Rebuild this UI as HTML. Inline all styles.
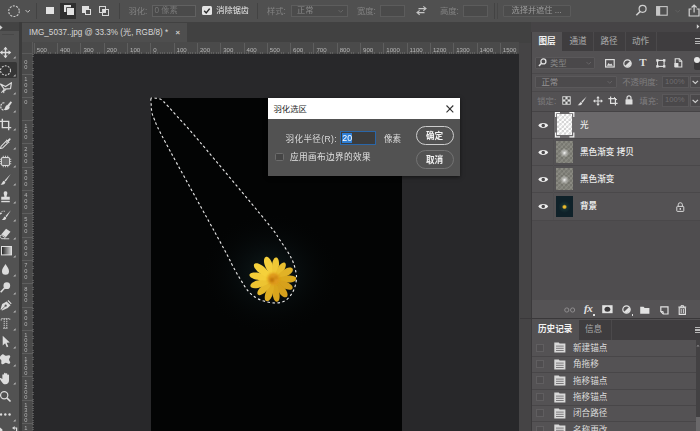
<!DOCTYPE html><html><head><meta charset="utf-8"><title>Photoshop</title><style>
html,body{margin:0;padding:0;}
body{width:700px;height:431px;overflow:hidden;background:#414141;position:relative;font-family:"Liberation Sans", "Noto Sans CJK SC", sans-serif;}
.a{position:absolute;box-sizing:border-box;}
.t{white-space:nowrap;}
svg{position:absolute;overflow:visible;}
#w{position:absolute;left:0;top:0;width:700px;height:431px;overflow:hidden;filter:blur(0.4px);}
</style></head><body><div id="w">
<div class="a" style="left:33px;top:53.5px;width:486px;height:378px;background:#28282a;"></div>
<div class="a" style="left:150.5px;top:97.5px;width:251px;height:334px;background:#030404;"></div>
<svg style="left:150.5px;top:97.5px" width="251" height="334" viewBox="0 0 251 334"><defs>
<radialGradient id="glow" cx="50%" cy="50%" r="50%">
<stop offset="0" stop-color="#12201f" stop-opacity="0.9"/>
<stop offset="0.4" stop-color="#0a1214" stop-opacity="0.6"/>
<stop offset="1" stop-color="#030404" stop-opacity="0"/>
</radialGradient>
<filter id="b1" x="-30%" y="-30%" width="160%" height="160%"><feGaussianBlur stdDeviation="0.7"/></filter>
<filter id="b2" x="-30%" y="-30%" width="160%" height="160%"><feGaussianBlur stdDeviation="0.8"/></filter>
<linearGradient id="pg" gradientUnits="userSpaceOnUse" x1="101.0" y1="159.5" x2="145.0" y2="203.5"><stop offset="0" stop-color="#f7d540"/><stop offset="0.5" stop-color="#ecbc26"/><stop offset="1" stop-color="#d29a18"/></linearGradient>
</defs><ellipse cx="119.0" cy="175.5" rx="70" ry="62" fill="url(#glow)"/><g filter="url(#b1)"><path d="M0,-2 C-2.1757999999999997,-4 -3.9559999999999995,-12.0 -3.76,-17.3 C-3.16,-22.8 -1.19,-24 0,-24 C1.19,-24 3.16,-22.8 3.76,-17.3 C3.9559999999999995,-12.0 2.1757999999999997,-4 0,-2Z" transform="translate(123.0 181.5) rotate(-20)" fill="#f4cf3a"/><path d="M0,-2 C-1.9866000000000001,-4 -3.612,-11.0 -3.43,-15.8 C-2.89,-20.9 -1.08,-22 0,-22 C1.08,-22 2.89,-20.9 3.43,-15.8 C3.612,-11.0 1.9866000000000001,-4 0,-2Z" transform="translate(123.0 181.5) rotate(6)" fill="#efc835"/><path d="M0,-2 C-1.8920000000000001,-4 -3.44,-10.0 -3.27,-14.4 C-2.75,-19.0 -1.03,-20 0,-20 C1.03,-20 2.75,-19.0 3.27,-14.4 C3.44,-10.0 1.8920000000000001,-4 0,-2Z" transform="translate(123.0 181.5) rotate(33)" fill="#e9be2e"/><path d="M0,-2 C-2.0812000000000004,-4 -3.7840000000000003,-10.8 -3.59,-15.5 C-3.03,-20.4 -1.14,-21.5 0,-21.5 C1.14,-21.5 3.03,-20.4 3.59,-15.5 C3.7840000000000003,-10.8 2.0812000000000004,-4 0,-2Z" transform="translate(123.0 181.5) rotate(60)" fill="#e1b226"/><path d="M0,-2 C-2.0339,-4 -3.698,-11.2 -3.51,-16.2 C-2.96,-21.4 -1.11,-22.5 0,-22.5 C1.11,-22.5 2.96,-21.4 3.51,-16.2 C3.698,-11.2 2.0339,-4 0,-2Z" transform="translate(123.0 181.5) rotate(88)" fill="#dba81f"/><path d="M0,-2 C-1.9393,-4 -3.526,-10.2 -3.35,-14.8 C-2.82,-19.5 -1.06,-20.5 0,-20.5 C1.06,-20.5 2.82,-19.5 3.35,-14.8 C3.526,-10.2 1.9393,-4 0,-2Z" transform="translate(123.0 181.5) rotate(116)" fill="#d7a11b"/><path d="M0,-2 C-2.0812000000000004,-4 -3.7840000000000003,-10.8 -3.59,-15.5 C-3.03,-20.4 -1.14,-21.5 0,-21.5 C1.14,-21.5 3.03,-20.4 3.59,-15.5 C3.7840000000000003,-10.8 2.0812000000000004,-4 0,-2Z" transform="translate(123.0 181.5) rotate(144)" fill="#d6a01a"/><path d="M0,-2 C-1.9866000000000001,-4 -3.612,-11.2 -3.43,-16.2 C-2.89,-21.4 -1.08,-22.5 0,-22.5 C1.08,-22.5 2.89,-21.4 3.43,-16.2 C3.612,-11.2 1.9866000000000001,-4 0,-2Z" transform="translate(123.0 181.5) rotate(172)" fill="#d9a51d"/><path d="M0,-2 C-2.0812000000000004,-4 -3.7840000000000003,-11.5 -3.59,-16.6 C-3.03,-21.8 -1.14,-23 0,-23 C1.14,-23 3.03,-21.8 3.59,-16.6 C3.7840000000000003,-11.5 2.0812000000000004,-4 0,-2Z" transform="translate(123.0 181.5) rotate(199)" fill="#dfae23"/><path d="M0,-2 C-1.9866000000000001,-4 -3.612,-11.0 -3.43,-15.8 C-2.89,-20.9 -1.08,-22 0,-22 C1.08,-22 2.89,-20.9 3.43,-15.8 C3.612,-11.0 1.9866000000000001,-4 0,-2Z" transform="translate(123.0 181.5) rotate(227)" fill="#e6b92b"/><path d="M0,-2 C-2.1757999999999997,-4 -3.9559999999999995,-12.2 -3.76,-17.6 C-3.16,-23.3 -1.19,-24.5 0,-24.5 C1.19,-24.5 3.16,-23.3 3.76,-17.6 C3.9559999999999995,-12.2 2.1757999999999997,-4 0,-2Z" transform="translate(123.0 181.5) rotate(254)" fill="#edc433"/><path d="M0,-2 C-2.0812000000000004,-4 -3.7840000000000003,-12.5 -3.59,-18.0 C-3.03,-23.8 -1.14,-25 0,-25 C1.14,-25 3.03,-23.8 3.59,-18.0 C3.7840000000000003,-12.5 2.0812000000000004,-4 0,-2Z" transform="translate(123.0 181.5) rotate(281)" fill="#f3cd38"/><path d="M0,-2 C-2.1757999999999997,-4 -3.9559999999999995,-12.5 -3.76,-18.0 C-3.16,-23.8 -1.19,-25 0,-25 C1.19,-25 3.16,-23.8 3.76,-18.0 C3.9559999999999995,-12.5 2.1757999999999997,-4 0,-2Z" transform="translate(123.0 181.5) rotate(308)" fill="#f5d13b"/></g><g filter="url(#b2)"><circle cx="122.5" cy="181.0" r="6.2" fill="#df9a1a"/><circle cx="121.0" cy="182.0" r="2.4" fill="#bf7410"/><circle cx="125.0" cy="179.5" r="1.6" fill="#c98214"/></g><path d="M0.1,0.3C-0.6,1.3 0.1,4.3 0.2,6.5C0.3,8.7 0.3,11.2 0.8,13.5C1.3,15.8 0.7,15.3 3.0,20.5C5.3,25.7 3.4,23.8 14.5,44.5C25.6,65.2 58.3,124.0 69.5,144.5C80.7,165.0 78.2,161.3 81.5,167.5C84.8,173.7 86.8,177.2 89.5,181.5C92.2,185.8 94.8,190.4 97.5,193.5C100.2,196.6 102.7,198.3 105.5,200.0C108.3,201.7 111.2,202.7 114.5,203.5C117.8,204.3 122.2,205.2 125.5,205.0C128.8,204.8 131.8,204.2 134.5,202.5C137.2,200.8 139.8,197.5 141.5,194.5C143.2,191.5 144.4,187.8 145.0,184.5C145.6,181.2 145.8,178.5 145.0,174.5C144.2,170.5 143.2,166.0 140.5,160.5C137.8,155.0 132.8,147.8 128.5,141.5C124.2,135.2 127.8,138.8 114.5,122.5C101.2,106.2 63.5,61.2 48.5,43.5C33.5,25.8 30.5,23.2 24.5,16.5C18.5,9.8 15.2,6.1 12.5,3.5C9.8,0.9 9.8,1.3 8.5,0.7C7.2,0.2 5.9,0.3 4.5,0.2C3.1,0.1 0.8,-0.8 0.1,0.3Z" fill="none" stroke="#111" stroke-width="1"/><path d="M0.1,0.3C-0.6,1.3 0.1,4.3 0.2,6.5C0.3,8.7 0.3,11.2 0.8,13.5C1.3,15.8 0.7,15.3 3.0,20.5C5.3,25.7 3.4,23.8 14.5,44.5C25.6,65.2 58.3,124.0 69.5,144.5C80.7,165.0 78.2,161.3 81.5,167.5C84.8,173.7 86.8,177.2 89.5,181.5C92.2,185.8 94.8,190.4 97.5,193.5C100.2,196.6 102.7,198.3 105.5,200.0C108.3,201.7 111.2,202.7 114.5,203.5C117.8,204.3 122.2,205.2 125.5,205.0C128.8,204.8 131.8,204.2 134.5,202.5C137.2,200.8 139.8,197.5 141.5,194.5C143.2,191.5 144.4,187.8 145.0,184.5C145.6,181.2 145.8,178.5 145.0,174.5C144.2,170.5 143.2,166.0 140.5,160.5C137.8,155.0 132.8,147.8 128.5,141.5C124.2,135.2 127.8,138.8 114.5,122.5C101.2,106.2 63.5,61.2 48.5,43.5C33.5,25.8 30.5,23.2 24.5,16.5C18.5,9.8 15.2,6.1 12.5,3.5C9.8,0.9 9.8,1.3 8.5,0.7C7.2,0.2 5.9,0.3 4.5,0.2C3.1,0.1 0.8,-0.8 0.1,0.3Z" fill="none" stroke="#e6e6e6" stroke-width="1.15" stroke-dasharray="2.5 2.5"/></svg>
<div class="a" style="left:21.6px;top:22px;width:509.4px;height:21px;background:#414141;"></div>
<div class="a" style="left:21.6px;top:23.2px;width:165.6px;height:19.3px;background:#4e4e4e;"></div>
<div class="a t" style="left:29px;top:26px;font-size:8.15px;line-height:14px;height:14px;color:#d8d8d8;">IMG_5037..jpg @ 33.3% (光, RGB/8) *</div>
<div class="a t" style="left:175.6px;top:26px;font-size:7.8px;line-height:14px;height:14px;color:#cfcfcf;font-weight:bold;">×</div>
<div class="a" style="left:21.8px;top:42.3px;width:497.2px;height:11.2px;background:#4a4a4a;"></div>
<div class="a" style="left:21.8px;top:42.3px;width:11.2px;height:388.7px;background:#4a4a4a;"></div>
<div class="a" style="left:34px;top:51.5px;width:485.5px;height:2px;background:repeating-linear-gradient(90deg,#6a6a6a 0 0.8px,transparent 0.8px 2.33px);opacity:.7;"></div>
<div class="a" style="left:31.5px;top:54px;width:2px;height:377px;background:repeating-linear-gradient(180deg,#6a6a6a 0 0.8px,transparent 0.8px 2.33px);opacity:.7;"></div>
<div class="a" style="left:33.8px;top:43px;width:1px;height:10.5px;background:#5e5e5e;"></div>
<div class="a t" style="left:36.8px;top:45.5px;font-size:6.1px;line-height:7px;height:7px;color:#b4b4b4;">500</div>
<div class="a" style="left:57.1px;top:43px;width:1px;height:10.5px;background:#5e5e5e;"></div>
<div class="a t" style="left:60.1px;top:45.5px;font-size:6.1px;line-height:7px;height:7px;color:#b4b4b4;">400</div>
<div class="a" style="left:80.4px;top:43px;width:1px;height:10.5px;background:#5e5e5e;"></div>
<div class="a t" style="left:83.4px;top:45.5px;font-size:6.1px;line-height:7px;height:7px;color:#b4b4b4;">300</div>
<div class="a" style="left:103.7px;top:43px;width:1px;height:10.5px;background:#5e5e5e;"></div>
<div class="a t" style="left:106.7px;top:45.5px;font-size:6.1px;line-height:7px;height:7px;color:#b4b4b4;">200</div>
<div class="a" style="left:127.0px;top:43px;width:1px;height:10.5px;background:#5e5e5e;"></div>
<div class="a t" style="left:130.0px;top:45.5px;font-size:6.1px;line-height:7px;height:7px;color:#b4b4b4;">100</div>
<div class="a" style="left:150.3px;top:43px;width:1px;height:10.5px;background:#5e5e5e;"></div>
<div class="a t" style="left:153.3px;top:45.5px;font-size:6.1px;line-height:7px;height:7px;color:#b4b4b4;">0</div>
<div class="a" style="left:173.6px;top:43px;width:1px;height:10.5px;background:#5e5e5e;"></div>
<div class="a t" style="left:176.6px;top:45.5px;font-size:6.1px;line-height:7px;height:7px;color:#b4b4b4;">100</div>
<div class="a" style="left:196.9px;top:43px;width:1px;height:10.5px;background:#5e5e5e;"></div>
<div class="a t" style="left:199.9px;top:45.5px;font-size:6.1px;line-height:7px;height:7px;color:#b4b4b4;">200</div>
<div class="a" style="left:220.2px;top:43px;width:1px;height:10.5px;background:#5e5e5e;"></div>
<div class="a t" style="left:223.2px;top:45.5px;font-size:6.1px;line-height:7px;height:7px;color:#b4b4b4;">300</div>
<div class="a" style="left:243.5px;top:43px;width:1px;height:10.5px;background:#5e5e5e;"></div>
<div class="a t" style="left:246.5px;top:45.5px;font-size:6.1px;line-height:7px;height:7px;color:#b4b4b4;">400</div>
<div class="a" style="left:266.8px;top:43px;width:1px;height:10.5px;background:#5e5e5e;"></div>
<div class="a t" style="left:269.8px;top:45.5px;font-size:6.1px;line-height:7px;height:7px;color:#b4b4b4;">500</div>
<div class="a" style="left:290.1px;top:43px;width:1px;height:10.5px;background:#5e5e5e;"></div>
<div class="a t" style="left:293.1px;top:45.5px;font-size:6.1px;line-height:7px;height:7px;color:#b4b4b4;">600</div>
<div class="a" style="left:313.4px;top:43px;width:1px;height:10.5px;background:#5e5e5e;"></div>
<div class="a t" style="left:316.4px;top:45.5px;font-size:6.1px;line-height:7px;height:7px;color:#b4b4b4;">700</div>
<div class="a" style="left:336.7px;top:43px;width:1px;height:10.5px;background:#5e5e5e;"></div>
<div class="a t" style="left:339.7px;top:45.5px;font-size:6.1px;line-height:7px;height:7px;color:#b4b4b4;">800</div>
<div class="a" style="left:360.0px;top:43px;width:1px;height:10.5px;background:#5e5e5e;"></div>
<div class="a t" style="left:363.0px;top:45.5px;font-size:6.1px;line-height:7px;height:7px;color:#b4b4b4;">900</div>
<div class="a" style="left:383.3px;top:43px;width:1px;height:10.5px;background:#5e5e5e;"></div>
<div class="a t" style="left:386.3px;top:45.5px;font-size:6.1px;line-height:7px;height:7px;color:#b4b4b4;">1000</div>
<div class="a" style="left:406.6px;top:43px;width:1px;height:10.5px;background:#5e5e5e;"></div>
<div class="a t" style="left:409.6px;top:45.5px;font-size:6.1px;line-height:7px;height:7px;color:#b4b4b4;">1100</div>
<div class="a" style="left:429.9px;top:43px;width:1px;height:10.5px;background:#5e5e5e;"></div>
<div class="a t" style="left:432.9px;top:45.5px;font-size:6.1px;line-height:7px;height:7px;color:#b4b4b4;">1200</div>
<div class="a" style="left:453.2px;top:43px;width:1px;height:10.5px;background:#5e5e5e;"></div>
<div class="a t" style="left:456.2px;top:45.5px;font-size:6.1px;line-height:7px;height:7px;color:#b4b4b4;">1300</div>
<div class="a" style="left:476.5px;top:43px;width:1px;height:10.5px;background:#5e5e5e;"></div>
<div class="a t" style="left:479.5px;top:45.5px;font-size:6.1px;line-height:7px;height:7px;color:#b4b4b4;">1400</div>
<div class="a" style="left:499.8px;top:43px;width:1px;height:10.5px;background:#5e5e5e;"></div>
<div class="a t" style="left:502.8px;top:45.5px;font-size:6.1px;line-height:7px;height:7px;color:#b4b4b4;">1500</div>
<div class="a t" style="left:24.3px;top:58.5px;font-size:5.7px;line-height:6px;height:6px;color:#b4b4b4;">0</div>
<div class="a t" style="left:24.3px;top:64.4px;font-size:5.7px;line-height:6px;height:6px;color:#b4b4b4;">0</div>
<div class="a" style="left:22px;top:73.5px;width:11px;height:1px;background:#5e5e5e;"></div>
<div class="a t" style="left:24.3px;top:75.9px;font-size:5.7px;line-height:6px;height:6px;color:#b4b4b4;">1</div>
<div class="a t" style="left:24.3px;top:81.8px;font-size:5.7px;line-height:6px;height:6px;color:#b4b4b4;">0</div>
<div class="a t" style="left:24.3px;top:87.7px;font-size:5.7px;line-height:6px;height:6px;color:#b4b4b4;">0</div>
<div class="a" style="left:22px;top:96.8px;width:11px;height:1px;background:#5e5e5e;"></div>
<div class="a t" style="left:24.3px;top:99.2px;font-size:5.7px;line-height:6px;height:6px;color:#b4b4b4;">0</div>
<div class="a" style="left:22px;top:120.1px;width:11px;height:1px;background:#5e5e5e;"></div>
<div class="a t" style="left:24.3px;top:122.5px;font-size:5.7px;line-height:6px;height:6px;color:#b4b4b4;">1</div>
<div class="a t" style="left:24.3px;top:128.4px;font-size:5.7px;line-height:6px;height:6px;color:#b4b4b4;">0</div>
<div class="a t" style="left:24.3px;top:134.3px;font-size:5.7px;line-height:6px;height:6px;color:#b4b4b4;">0</div>
<div class="a" style="left:22px;top:143.4px;width:11px;height:1px;background:#5e5e5e;"></div>
<div class="a t" style="left:24.3px;top:145.8px;font-size:5.7px;line-height:6px;height:6px;color:#b4b4b4;">2</div>
<div class="a t" style="left:24.3px;top:151.7px;font-size:5.7px;line-height:6px;height:6px;color:#b4b4b4;">0</div>
<div class="a t" style="left:24.3px;top:157.6px;font-size:5.7px;line-height:6px;height:6px;color:#b4b4b4;">0</div>
<div class="a" style="left:22px;top:166.7px;width:11px;height:1px;background:#5e5e5e;"></div>
<div class="a t" style="left:24.3px;top:169.1px;font-size:5.7px;line-height:6px;height:6px;color:#b4b4b4;">3</div>
<div class="a t" style="left:24.3px;top:175.0px;font-size:5.7px;line-height:6px;height:6px;color:#b4b4b4;">0</div>
<div class="a t" style="left:24.3px;top:180.9px;font-size:5.7px;line-height:6px;height:6px;color:#b4b4b4;">0</div>
<div class="a" style="left:22px;top:190.0px;width:11px;height:1px;background:#5e5e5e;"></div>
<div class="a t" style="left:24.3px;top:192.4px;font-size:5.7px;line-height:6px;height:6px;color:#b4b4b4;">4</div>
<div class="a t" style="left:24.3px;top:198.3px;font-size:5.7px;line-height:6px;height:6px;color:#b4b4b4;">0</div>
<div class="a t" style="left:24.3px;top:204.2px;font-size:5.7px;line-height:6px;height:6px;color:#b4b4b4;">0</div>
<div class="a" style="left:22px;top:213.3px;width:11px;height:1px;background:#5e5e5e;"></div>
<div class="a t" style="left:24.3px;top:215.7px;font-size:5.7px;line-height:6px;height:6px;color:#b4b4b4;">5</div>
<div class="a t" style="left:24.3px;top:221.6px;font-size:5.7px;line-height:6px;height:6px;color:#b4b4b4;">0</div>
<div class="a t" style="left:24.3px;top:227.5px;font-size:5.7px;line-height:6px;height:6px;color:#b4b4b4;">0</div>
<div class="a" style="left:22px;top:236.6px;width:11px;height:1px;background:#5e5e5e;"></div>
<div class="a t" style="left:24.3px;top:239.0px;font-size:5.7px;line-height:6px;height:6px;color:#b4b4b4;">6</div>
<div class="a t" style="left:24.3px;top:244.9px;font-size:5.7px;line-height:6px;height:6px;color:#b4b4b4;">0</div>
<div class="a t" style="left:24.3px;top:250.8px;font-size:5.7px;line-height:6px;height:6px;color:#b4b4b4;">0</div>
<div class="a" style="left:22px;top:259.9px;width:11px;height:1px;background:#5e5e5e;"></div>
<div class="a t" style="left:24.3px;top:262.3px;font-size:5.7px;line-height:6px;height:6px;color:#b4b4b4;">7</div>
<div class="a t" style="left:24.3px;top:268.2px;font-size:5.7px;line-height:6px;height:6px;color:#b4b4b4;">0</div>
<div class="a t" style="left:24.3px;top:274.1px;font-size:5.7px;line-height:6px;height:6px;color:#b4b4b4;">0</div>
<div class="a" style="left:22px;top:283.2px;width:11px;height:1px;background:#5e5e5e;"></div>
<div class="a t" style="left:24.3px;top:285.6px;font-size:5.7px;line-height:6px;height:6px;color:#b4b4b4;">8</div>
<div class="a t" style="left:24.3px;top:291.5px;font-size:5.7px;line-height:6px;height:6px;color:#b4b4b4;">0</div>
<div class="a t" style="left:24.3px;top:297.4px;font-size:5.7px;line-height:6px;height:6px;color:#b4b4b4;">0</div>
<div class="a" style="left:22px;top:306.5px;width:11px;height:1px;background:#5e5e5e;"></div>
<div class="a t" style="left:24.3px;top:308.9px;font-size:5.7px;line-height:6px;height:6px;color:#b4b4b4;">9</div>
<div class="a t" style="left:24.3px;top:314.8px;font-size:5.7px;line-height:6px;height:6px;color:#b4b4b4;">0</div>
<div class="a t" style="left:24.3px;top:320.7px;font-size:5.7px;line-height:6px;height:6px;color:#b4b4b4;">0</div>
<div class="a" style="left:22px;top:329.8px;width:11px;height:1px;background:#5e5e5e;"></div>
<div class="a t" style="left:24.3px;top:332.2px;font-size:5.7px;line-height:6px;height:6px;color:#b4b4b4;">1</div>
<div class="a t" style="left:24.3px;top:337.1px;font-size:5.7px;line-height:6px;height:6px;color:#b4b4b4;">0</div>
<div class="a t" style="left:24.3px;top:342.0px;font-size:5.7px;line-height:6px;height:6px;color:#b4b4b4;">0</div>
<div class="a t" style="left:24.3px;top:346.9px;font-size:5.7px;line-height:6px;height:6px;color:#b4b4b4;">0</div>
<div class="a" style="left:22px;top:353.1px;width:11px;height:1px;background:#5e5e5e;"></div>
<div class="a t" style="left:24.3px;top:355.5px;font-size:5.7px;line-height:6px;height:6px;color:#b4b4b4;">1</div>
<div class="a t" style="left:24.3px;top:360.4px;font-size:5.7px;line-height:6px;height:6px;color:#b4b4b4;">1</div>
<div class="a t" style="left:24.3px;top:365.3px;font-size:5.7px;line-height:6px;height:6px;color:#b4b4b4;">0</div>
<div class="a t" style="left:24.3px;top:370.2px;font-size:5.7px;line-height:6px;height:6px;color:#b4b4b4;">0</div>
<div class="a" style="left:22px;top:376.4px;width:11px;height:1px;background:#5e5e5e;"></div>
<div class="a t" style="left:24.3px;top:378.8px;font-size:5.7px;line-height:6px;height:6px;color:#b4b4b4;">1</div>
<div class="a t" style="left:24.3px;top:383.7px;font-size:5.7px;line-height:6px;height:6px;color:#b4b4b4;">2</div>
<div class="a t" style="left:24.3px;top:388.6px;font-size:5.7px;line-height:6px;height:6px;color:#b4b4b4;">0</div>
<div class="a t" style="left:24.3px;top:393.5px;font-size:5.7px;line-height:6px;height:6px;color:#b4b4b4;">0</div>
<div class="a" style="left:22px;top:399.7px;width:11px;height:1px;background:#5e5e5e;"></div>
<div class="a t" style="left:24.3px;top:402.1px;font-size:5.7px;line-height:6px;height:6px;color:#b4b4b4;">1</div>
<div class="a t" style="left:24.3px;top:407.0px;font-size:5.7px;line-height:6px;height:6px;color:#b4b4b4;">3</div>
<div class="a t" style="left:24.3px;top:411.9px;font-size:5.7px;line-height:6px;height:6px;color:#b4b4b4;">0</div>
<div class="a t" style="left:24.3px;top:416.8px;font-size:5.7px;line-height:6px;height:6px;color:#b4b4b4;">0</div>
<div class="a" style="left:22px;top:423.0px;width:11px;height:1px;background:#5e5e5e;"></div>
<div class="a t" style="left:24.3px;top:425.4px;font-size:5.7px;line-height:6px;height:6px;color:#b4b4b4;">1</div>
<div class="a t" style="left:24.3px;top:430.3px;font-size:5.7px;line-height:6px;height:6px;color:#b4b4b4;">4</div>
<div class="a" style="left:21.8px;top:42.3px;width:11.4px;height:11.4px;background:#4a4a4a;border-right:1px solid #5a5a5a;border-bottom:1px solid #5a5a5a;"></div>
<div class="a" style="left:0px;top:0px;width:700px;height:21.7px;background:#505050;"></div>
<svg style="left:7px;top:4px" width="14" height="14" viewBox="0 0 14 14"><circle cx="7" cy="7.2" r="5.3" fill="none" stroke="#c8c8c8" stroke-width="1.1" stroke-dasharray="2.1 1.2"/></svg>
<svg style="left:25px;top:9px" width="6" height="5" viewBox="0 0 6 5"><path d="M0.5,1 L2.7,3.3 L5,1" fill="none" stroke="#bdbdbd" stroke-width="1"/></svg>
<div class="a" style="left:36.3px;top:3px;width:1px;height:16px;background:#434343;"></div>
<div class="a" style="left:46.3px;top:7px;width:7.7px;height:7.2px;background:#e2e2e2;"></div>
<div class="a" style="left:60px;top:2.6px;width:16px;height:16.2px;background:#2f2f2f;"></div>
<div class="a" style="left:63.5px;top:5.3px;width:7px;height:7px;background:#e2e2e2;"></div>
<div class="a" style="left:66.5px;top:8.3px;width:7.2px;height:7.2px;background:#e2e2e2;box-shadow:-0.6px -0.6px 0 0.2px #2f2f2f;"></div>
<div class="a" style="left:82.2px;top:6px;width:6.5px;height:6.5px;background:#dedede;"></div>
<div class="a" style="left:84.7px;top:8.6px;width:6.8px;height:6.8px;background:#505050;border:1.2px solid #dedede;"></div>
<div class="a" style="left:99.3px;top:5.8px;width:7px;height:7px;border:1.1px solid #d6d6d6;"></div>
<div class="a" style="left:102.3px;top:8.8px;width:7.2px;height:7.2px;border:1.1px solid #d6d6d6;"></div>
<div class="a" style="left:102.6px;top:9.1px;width:3.4px;height:3.4px;background:#e0e0e0;"></div>
<div class="a" style="left:119.2px;top:3px;width:1px;height:16px;background:#434343;"></div>
<div class="a t" style="left:128.5px;top:5px;font-size:8.3px;line-height:12px;height:12px;color:#828282;">羽化:</div>
<div class="a" style="left:152px;top:5px;width:44.3px;height:11.7px;background:#4a4a4a;border:1px solid #616161;"></div>
<div class="a t" style="left:154.5px;top:5px;font-size:8.2px;line-height:12px;height:12px;color:#767676;">0 像素</div>
<div class="a" style="left:202.3px;top:5.5px;width:9.8px;height:9.6px;background:#e4e4e4;border-radius:1.5px;"></div>
<svg style="left:202.3px;top:5.5px" width="9.8" height="9.6" viewBox="0 0 9.8 9.6"><path d="M2.2,4.8 L4.2,6.9 L7.7,2.6" fill="none" stroke="#2c2c2c" stroke-width="1.5"/></svg>
<div class="a t" style="left:216.3px;top:5px;font-size:8.2px;line-height:12px;height:12px;color:#e8e8e8;">消除锯齿</div>
<div class="a" style="left:256.7px;top:3px;width:1px;height:16px;background:#434343;"></div>
<div class="a t" style="left:267px;top:5px;font-size:8.3px;line-height:12px;height:12px;color:#828282;">样式:</div>
<div class="a" style="left:291.3px;top:5px;width:57px;height:11.7px;background:#4b4b4b;border:1px solid #5d5d5d;"></div>
<div class="a t" style="left:297px;top:5px;font-size:8.2px;line-height:12px;height:12px;color:#8a8a8a;">正常</div>
<svg style="left:338px;top:9px" width="6" height="5" viewBox="0 0 6 5"><path d="M0.5,1 L2.7,3.3 L5,1" fill="none" stroke="#666" stroke-width="1"/></svg>
<div class="a t" style="left:357px;top:5px;font-size:8.3px;line-height:12px;height:12px;color:#828282;">宽度:</div>
<div class="a" style="left:379.6px;top:5.3px;width:25px;height:11.4px;background:#4a4a4a;border:1px solid #5c5c5c;"></div>
<svg style="left:415.5px;top:6px" width="11" height="9" viewBox="0 0 11 9"><path d="M2.5,2.6 H10 M7.3,0.4 L10,2.6 L7.3,4.8 M8.5,6.6 H1 M3.7,4.4 L1,6.6 L3.7,8.8" fill="none" stroke="#c4c4c4" stroke-width="1.1"/></svg>
<div class="a t" style="left:440px;top:5px;font-size:8.3px;line-height:12px;height:12px;color:#828282;">高度:</div>
<div class="a" style="left:462.8px;top:5.3px;width:25.5px;height:11.4px;background:#4a4a4a;border:1px solid #5c5c5c;"></div>
<div class="a" style="left:494px;top:3px;width:1px;height:16px;background:#434343;"></div>
<div class="a" style="left:496.5px;top:3px;width:1px;height:16px;background:#474747;"></div>
<div class="a" style="left:503px;top:5px;width:67.5px;height:11.7px;background:#4c4c4c;border:1px solid #5b5b5b;border-radius:1px;"></div>
<div class="a t" style="left:511.5px;top:5px;font-size:8.2px;line-height:12px;height:12px;color:#9a9a9a;">选择并遮住 ...</div>
<svg style="left:635px;top:4px" width="12" height="12" viewBox="0 0 12 12"><circle cx="7.6" cy="4.8" r="3.5" fill="none" stroke="#cfcfcf" stroke-width="1.2"/><path d="M5.2,7.4 L1.3,11.3" stroke="#cfcfcf" stroke-width="1.5"/></svg>
<svg style="left:656px;top:5.5px" width="12" height="10" viewBox="0 0 12 10"><rect x="0.6" y="0.6" width="10.6" height="8.6" fill="none" stroke="#c6c6c6" stroke-width="1.1"/><rect x="0.6" y="0.6" width="3.6" height="8.6" fill="#c6c6c6"/></svg>
<svg style="left:675px;top:9px" width="6" height="5" viewBox="0 0 6 5"><path d="M0.5,1 L2.7,3.3 L5,1" fill="none" stroke="#5f5f5f" stroke-width="1"/></svg>
<svg style="left:688px;top:3.5px" width="12" height="13" viewBox="0 0 12 13"><path d="M3.6,5 H1.2 V12 H11 V5 H8.6" fill="none" stroke="#d2d2d2" stroke-width="1.2"/><path d="M6.1,8.5 V1.2 M3.6,3.5 L6.1,1 L8.6,3.5" fill="none" stroke="#d2d2d2" stroke-width="1.2"/></svg>
<div class="a" style="left:0px;top:22px;width:18.8px;height:409px;background:#525252;"></div>
<div class="a" style="left:0px;top:21.8px;width:18.8px;height:9.5px;background:#434343;"></div>
<svg style="left:0px;top:24.5px" width="4" height="5" viewBox="0 0 4 5"><path d="M0,0.3 L2.6,2.5 L0,4.7Z" fill="#d0d0d0"/></svg>
<div class="a" style="left:2px;top:33.8px;width:11.6px;height:1.2px;background:#484848;"></div>
<div class="a" style="left:18.8px;top:21.8px;width:2.9px;height:410px;background:#3b3b3b;"></div>
<svg style="left:-0.6px;top:45.5px" width="13" height="13" viewBox="0 0 14 14"><path d="M7,2 V12 M2,7 H12" fill="none" stroke="#dcdcdc" stroke-width="1.5"/><path d="M7,0.8 L9.4,3.8 H4.6Z M7,13.2 L9.4,10.2 H4.6Z M0.8,7 L3.8,4.6 V9.4Z M13.2,7 L10.2,4.6 V9.4Z" fill="#dcdcdc"/></svg>
<svg style="left:13px;top:56.2px" width="3" height="3" viewBox="0 0 3 3"><path d="M2.6,0.2 V2.6 H0.2Z" fill="#bdbdbd"/></svg>
<div class="a" style="left:0px;top:61.5px;width:17.2px;height:16.5px;background:#363636;border-radius:0 1.5px 1.5px 0;"></div>
<svg style="left:-0.6px;top:63.5px" width="13" height="13" viewBox="0 0 14 14"><ellipse cx="7" cy="7" rx="5.4" ry="5" fill="none" stroke="#dcdcdc" stroke-width="1.1" stroke-dasharray="2 1.3"/></svg>
<svg style="left:13px;top:74.2px" width="3" height="3" viewBox="0 0 3 3"><path d="M2.6,0.2 V2.6 H0.2Z" fill="#bdbdbd"/></svg>
<svg style="left:-0.6px;top:81.5px" width="13" height="13" viewBox="0 0 14 14"><path d="M1.7,2.2 L7.1,4.9 L13.4,0.7 L12.4,7.2 L5.6,7.7 Z" fill="none" stroke="#dcdcdc" stroke-width="1.25" stroke-linejoin="round"/><path d="M5.8,7.6 L2.6,11.6 M7.6,8 L4.8,10.4 L5.4,12" fill="none" stroke="#dcdcdc" stroke-width="1.1"/></svg>
<svg style="left:13px;top:92.2px" width="3" height="3" viewBox="0 0 3 3"><path d="M2.6,0.2 V2.6 H0.2Z" fill="#bdbdbd"/></svg>
<svg style="left:-0.6px;top:99.5px" width="13" height="13" viewBox="0 0 14 14"><path d="M5.8,3 C0.6,2.4 0.6,11.6 5.8,11" fill="none" stroke="#dcdcdc" stroke-width="1.3" stroke-dasharray="2.2 0.9"/><path d="M14,2.6 L12.6,1.4 L8.6,5.8 L10.6,7.6 Z" fill="#dcdcdc"/><path d="M9,5.4 C6.6,5.8 7.2,8.6 5.2,10.6 C8.8,11.8 12,9.6 11.4,7.4Z" fill="#dcdcdc"/></svg>
<svg style="left:13px;top:110.2px" width="3" height="3" viewBox="0 0 3 3"><path d="M2.6,0.2 V2.6 H0.2Z" fill="#bdbdbd"/></svg>
<svg style="left:-0.6px;top:117.5px" width="13" height="13" viewBox="0 0 14 14"><path d="M3.6,0.8 V10.4 H13.2 M0.8,3.6 H10.4 V13.2" fill="none" stroke="#dcdcdc" stroke-width="1.5"/></svg>
<svg style="left:13px;top:128.2px" width="3" height="3" viewBox="0 0 3 3"><path d="M2.6,0.2 V2.6 H0.2Z" fill="#bdbdbd"/></svg>
<svg style="left:-0.6px;top:136.5px" width="13" height="13" viewBox="0 0 14 14"><path d="M1.6,12.4 L2.2,10 L7.4,4.8 L9.2,6.6 L4,11.8 Z" fill="none" stroke="#dcdcdc" stroke-width="1.1" stroke-linejoin="round"/><path d="M7.2,3.4 L10.6,6.8 L11.4,6 L10.4,5 L12.6,2.8 A1.4,1.4 0 0 0 11.2,1.4 L9,3.6 L8,2.6Z" fill="#dcdcdc"/></svg>
<svg style="left:13px;top:147.2px" width="3" height="3" viewBox="0 0 3 3"><path d="M2.6,0.2 V2.6 H0.2Z" fill="#bdbdbd"/></svg>
<svg style="left:-0.6px;top:154.5px" width="13" height="13" viewBox="0 0 14 14"><rect x="2.6" y="2.6" width="8.8" height="8.8" rx="1.6" fill="#6d6d6d" stroke="#dcdcdc" stroke-width="1.1"/><path d="M4.6,0.8 V2.4 M7,0.8 V2.4 M9.4,0.8 V2.4 M4.6,11.6 V13.2 M7,11.6 V13.2 M9.4,11.6 V13.2 M0.8,4.6 H2.4 M0.8,7 H2.4 M0.8,9.4 H2.4 M11.6,4.6 H13.2 M11.6,7 H13.2 M11.6,9.4 H13.2" fill="none" stroke="#dcdcdc" stroke-width="0.9"/></svg>
<svg style="left:13px;top:165.2px" width="3" height="3" viewBox="0 0 3 3"><path d="M2.6,0.2 V2.6 H0.2Z" fill="#bdbdbd"/></svg>
<svg style="left:-0.6px;top:172.5px" width="13" height="13" viewBox="0 0 14 14"><path d="M12.6,1.2 L6,8 L7.2,9.2 Z" fill="#dcdcdc"/><path d="M5.4,8.4 C3.6,8.8 4,11 1.6,12.4 C4.4,13 7,11.6 6.8,9.7Z" fill="#dcdcdc"/></svg>
<svg style="left:13px;top:183.2px" width="3" height="3" viewBox="0 0 3 3"><path d="M2.6,0.2 V2.6 H0.2Z" fill="#bdbdbd"/></svg>
<svg style="left:-0.6px;top:190.5px" width="13" height="13" viewBox="0 0 14 14"><path d="M5,1.8 A2.1,2.1 0 0 1 9,1.8 C9,3.6 8.2,4.6 8.2,6.2 H11.6 V9.4 H2.4 V6.2 H5.8 C5.8,4.6 5,3.6 5,1.8Z" fill="#dcdcdc"/><rect x="2.4" y="10.6" width="9.2" height="1.5" fill="#dcdcdc"/></svg>
<svg style="left:13px;top:201.2px" width="3" height="3" viewBox="0 0 3 3"><path d="M2.6,0.2 V2.6 H0.2Z" fill="#bdbdbd"/></svg>
<svg style="left:-0.6px;top:208.5px" width="13" height="13" viewBox="0 0 14 14"><path d="M12.8,1.4 L7,7.6 L8.2,8.8 Z" fill="#dcdcdc"/><path d="M6.4,8 C4.8,8.4 5.2,10.4 3,11.8 C5.6,12.4 8,11 7.8,9.3Z" fill="#dcdcdc"/><path d="M1.4,5.6 A3.6,3.6 0 0 1 6.4,2.6" fill="none" stroke="#dcdcdc" stroke-width="1" stroke-dasharray="1.5 1"/><path d="M0.4,3.6 L1.4,6 L3.6,4.8Z" fill="#dcdcdc"/></svg>
<svg style="left:13px;top:219.2px" width="3" height="3" viewBox="0 0 3 3"><path d="M2.6,0.2 V2.6 H0.2Z" fill="#bdbdbd"/></svg>
<svg style="left:-0.6px;top:226.5px" width="13" height="13" viewBox="0 0 14 14"><path d="M7.6,2 L12.4,5.2 L7.4,11 L2.6,7.8 Z" fill="#dcdcdc"/><path d="M2.2,8.4 L6.8,11.6 L5.8,12.6 H2.6 L1.2,10.2Z" fill="none" stroke="#dcdcdc" stroke-width="1"/><path d="M5.6,12.7 H11" fill="none" stroke="#dcdcdc" stroke-width="1"/></svg>
<svg style="left:13px;top:237.2px" width="3" height="3" viewBox="0 0 3 3"><path d="M2.6,0.2 V2.6 H0.2Z" fill="#bdbdbd"/></svg>
<svg style="left:0.6px;top:246.4px" width="11" height="9.4" viewBox="0 0 11 9.4"><defs><linearGradient id="gr" x1="0" x2="1" y1="0" y2="0"><stop offset="0" stop-color="#1e1e1e"/><stop offset="1" stop-color="#d8d8d8"/></linearGradient></defs><rect x="0.5" y="0.5" width="10" height="8.4" fill="url(#gr)" stroke="#e0e0e0" stroke-width="1"/></svg>
<svg style="left:13px;top:255.2px" width="3" height="3" viewBox="0 0 3 3"><path d="M2.6,0.2 V2.6 H0.2Z" fill="#bdbdbd"/></svg>
<svg style="left:-0.6px;top:263.0px" width="13" height="13" viewBox="0 0 14 14"><path d="M7,1.2 C8.4,4 10.8,6 10.8,8.8 A3.8,3.8 0 0 1 3.2,8.8 C3.2,6 5.6,4 7,1.2Z" fill="#dcdcdc"/></svg>
<svg style="left:13px;top:273.7px" width="3" height="3" viewBox="0 0 3 3"><path d="M2.6,0.2 V2.6 H0.2Z" fill="#bdbdbd"/></svg>
<svg style="left:-0.6px;top:281.0px" width="13" height="13" viewBox="0 0 14 14"><circle cx="8.4" cy="5" r="3.6" fill="#dcdcdc"/><path d="M6,7.6 L1.8,12.2" fill="none" stroke="#dcdcdc" stroke-width="1.7"/></svg>
<svg style="left:13px;top:291.7px" width="3" height="3" viewBox="0 0 3 3"><path d="M2.6,0.2 V2.6 H0.2Z" fill="#bdbdbd"/></svg>
<svg style="left:-0.6px;top:299.0px" width="13" height="13" viewBox="0 0 14 14"><path d="M1.6,11.4 L3.4,5.4 L8.2,2.6 L12.4,6.8 L9.4,9.6 L3.4,12.4Z" fill="#dcdcdc"/><circle cx="7.2" cy="7.2" r="1.2" fill="#525252"/><path d="M2.2,12 L6.4,8" stroke="#525252" stroke-width="0.8"/><path d="M9.6,1.6 L13.2,5.2" fill="none" stroke="#dcdcdc" stroke-width="1.2"/></svg>
<svg style="left:13px;top:309.7px" width="3" height="3" viewBox="0 0 3 3"><path d="M2.6,0.2 V2.6 H0.2Z" fill="#bdbdbd"/></svg>
<svg style="left:-0.6px;top:317.0px" width="13" height="13" viewBox="0 0 14 14"><path d="M2.4,3.8 V1.8 H11.6 V3.8 M5.6,1.8 V12 M8.4,1.8 V12 M4.6,12.2 H9.4" fill="none" stroke="#dcdcdc" stroke-width="1" stroke-dasharray="1.4 0.8"/></svg>
<svg style="left:13px;top:327.7px" width="3" height="3" viewBox="0 0 3 3"><path d="M2.6,0.2 V2.6 H0.2Z" fill="#bdbdbd"/></svg>
<svg style="left:-0.6px;top:335.0px" width="13" height="13" viewBox="0 0 14 14"><path d="M4,0.8 L4,11.4 L6.6,9 L8.4,13.2 L10,12.5 L8.2,8.4 L11.6,8.2Z" fill="#dcdcdc"/></svg>
<svg style="left:13px;top:345.7px" width="3" height="3" viewBox="0 0 3 3"><path d="M2.6,0.2 V2.6 H0.2Z" fill="#bdbdbd"/></svg>
<svg style="left:-0.6px;top:353.0px" width="13" height="13" viewBox="0 0 14 14"><path d="M3.4,1.6 C5,0.8 6,2.6 7.2,3 C8.6,3.4 10.6,1.6 11.8,3 C13,4.4 10.6,5.8 10.8,7.2 C11,8.6 13,9.8 11.6,11.2 C10.2,12.4 8.8,10.4 7.4,10.4 C6,10.4 5.2,12.6 3.4,12 C1.6,11.4 3,9 2.4,7.8 C1.8,6.6 -0.2,6.2 0.8,4.4 C1.6,3 2.2,2.2 3.4,1.6Z" fill="#dcdcdc"/></svg>
<svg style="left:13px;top:363.7px" width="3" height="3" viewBox="0 0 3 3"><path d="M2.6,0.2 V2.6 H0.2Z" fill="#bdbdbd"/></svg>
<svg style="left:-0.6px;top:371.5px" width="13" height="13" viewBox="0 0 14 14"><path d="M3.6,7.6 V3.2 A0.9,0.9 0 0 1 5.4,3.2 V6 V1.8 A0.9,0.9 0 0 1 7.2,1.8 V6 V2.2 A0.9,0.9 0 0 1 9,2.2 V6.4 V3.6 A0.9,0.9 0 0 1 10.8,3.6 V9 C10.8,11.6 9.4,13.2 7,13.2 C5,13.2 4,12.2 2.8,10.4 L1,7.6 C0.6,6.8 1.8,6 2.6,7Z" fill="#dcdcdc"/></svg>
<svg style="left:13px;top:382.2px" width="3" height="3" viewBox="0 0 3 3"><path d="M2.6,0.2 V2.6 H0.2Z" fill="#bdbdbd"/></svg>
<svg style="left:-0.6px;top:389.5px" width="13" height="13" viewBox="0 0 14 14"><circle cx="5.6" cy="5.6" r="3.9" fill="none" stroke="#dcdcdc" stroke-width="1.3"/><path d="M8.4,8.4 L12.4,12.4" fill="none" stroke="#dcdcdc" stroke-width="1.8"/></svg>
<svg style="left:-0.6px;top:408.0px" width="13" height="13" viewBox="0 0 14 14"><circle cx="2.2" cy="7" r="1.3" fill="#dcdcdc"/><circle cx="6.8" cy="7" r="1.3" fill="#dcdcdc"/><circle cx="11.4" cy="7" r="1.3" fill="#dcdcdc"/></svg>
<svg style="left:13px;top:418.7px" width="3" height="3" viewBox="0 0 3 3"><path d="M2.6,0.2 V2.6 H0.2Z" fill="#bdbdbd"/></svg>
<svg style="left:0px;top:424.5px" width="20" height="7" viewBox="0 0 20 7"><path d="M0,2.4 L2.4,4.6 V7 H0Z" fill="#dcdcdc"/><path d="M12.6,3 H16.6 V7" fill="none" stroke="#dcdcdc" stroke-width="1.2"/><path d="M12.4,3 L14.6,1 V5Z" fill="#dcdcdc"/></svg>
<div class="a" style="left:519px;top:43px;width:12px;height:388px;background:#454445;"></div>
<div class="a" style="left:530.5px;top:22px;width:169.5px;height:409px;background:#464446;"></div>
<div class="a" style="left:531.3px;top:31.5px;width:1px;height:400px;background:#3b393b;"></div>
<div class="a" style="left:532px;top:31.5px;width:168px;height:400px;background:#535153;"></div>
<svg style="left:695.5px;top:24px" width="4" height="5" viewBox="0 0 4 5"><path d="M0.8,0.3 L3.4,2.5 L0.8,4.7Z" fill="#d0d0d0"/></svg>
<div class="a" style="left:532px;top:31.5px;width:168px;height:19.2px;background:#3f3d3f;"></div>
<div class="a" style="left:532px;top:31.5px;width:30.3px;height:19.2px;background:#535153;"></div>
<div class="a" style="left:593px;top:32px;width:1px;height:18.5px;background:#4b494b;"></div>
<div class="a" style="left:625px;top:32px;width:1px;height:18.5px;background:#4b494b;"></div>
<div class="a" style="left:656px;top:32px;width:1px;height:18.5px;background:#4b494b;"></div>
<div class="a t" style="left:538.5px;top:34.5px;font-size:8.6px;line-height:13px;height:13px;color:#f2f2f2;font-weight:bold;">图层</div>
<div class="a t" style="left:569.5px;top:34.5px;font-size:8.6px;line-height:13px;height:13px;color:#adadad;">通道</div>
<div class="a t" style="left:600.5px;top:34.5px;font-size:8.6px;line-height:13px;height:13px;color:#adadad;">路径</div>
<div class="a t" style="left:632px;top:34.5px;font-size:8.6px;line-height:13px;height:13px;color:#adadad;">动作</div>
<div class="a" style="left:694.5px;top:38.2px;width:6px;height:1.2px;background:#b8b8b8;"></div>
<div class="a" style="left:694.5px;top:40.6px;width:6px;height:1.2px;background:#b8b8b8;"></div>
<div class="a" style="left:694.5px;top:43px;width:6px;height:1.2px;background:#b8b8b8;"></div>
<div class="a" style="left:535px;top:56.5px;width:59.5px;height:12.5px;background:#4a484a;border:1px solid #5a585a;border-radius:1px;"></div>
<svg style="left:538px;top:58px" width="9" height="9" viewBox="0 0 9 9"><circle cx="5.4" cy="3.4" r="2.5" fill="none" stroke="#e0e0e0" stroke-width="1.3"/><path d="M3.6,5.2 L0.9,8" stroke="#e0e0e0" stroke-width="1.5"/></svg>
<div class="a t" style="left:550px;top:56.5px;font-size:8.3px;line-height:12.5px;height:12.5px;color:#878787;">类型</div>
<svg style="left:585.5px;top:61px" width="6" height="5" viewBox="0 0 6 5"><path d="M0.5,1 L2.7,3.3 L5,1" fill="none" stroke="#646264" stroke-width="1"/></svg>
<svg style="left:605px;top:59px" width="10" height="9" viewBox="0 0 10 9"><rect x="0.6" y="0.6" width="8.6" height="7.4" fill="none" stroke="#dedede" stroke-width="1.2"/><path d="M1.8,6.8 L3.6,4 L5,5.6 L6.2,4.4 L7.8,6.8Z" fill="#dedede"/></svg>
<svg style="left:622.5px;top:58.8px" width="9" height="9" viewBox="0 0 9 9"><circle cx="4.5" cy="4.5" r="3.7" fill="none" stroke="#dedede" stroke-width="1.2"/><path d="M1.9,7.1 A3.7,3.7 0 0 0 7.1,1.9Z" fill="#dedede"/></svg>
<div class="a t" style="left:639.3px;top:56px;font-size:11px;line-height:13px;height:13px;color:#dedede;font-family:'Liberation Serif',serif;font-weight:bold;">T</div>
<svg style="left:656px;top:58.8px" width="10" height="9" viewBox="0 0 10 9"><rect x="1.5" y="1.4" width="6.6" height="6" fill="none" stroke="#dedede" stroke-width="1.1"/><rect x="0.2" y="0.2" width="2.4" height="2.4" fill="#dedede"/><rect x="7" y="0.2" width="2.4" height="2.4" fill="#dedede"/><rect x="0.2" y="6.2" width="2.4" height="2.4" fill="#dedede"/><rect x="7" y="6.2" width="2.4" height="2.4" fill="#dedede"/></svg>
<svg style="left:674px;top:58.3px" width="9" height="10" viewBox="0 0 9 10"><path d="M1.2,0.8 H5.4 L7.8,3.2 V9 H1.2Z" fill="none" stroke="#dedede" stroke-width="1.1"/><path d="M5.2,0.8 V3.4 H7.8" fill="none" stroke="#dedede" stroke-width="0.9"/><rect x="0.4" y="5" width="4" height="4" fill="#dedede"/></svg>
<div class="a" style="left:694.3px;top:59px;width:6px;height:11px;background:#3a383a;border-radius:2px 0 0 2px;"></div>
<div class="a" style="left:694px;top:57px;width:6px;height:6px;background:#e6e6e6;border-radius:3px;"></div>
<div class="a" style="left:532px;top:73px;width:168px;height:1px;background:#4a484a;"></div>
<div class="a" style="left:535px;top:75.7px;width:81.5px;height:12.6px;background:#4c4a4c;border:1px solid #5b595b;border-radius:1px;"></div>
<div class="a t" style="left:541.5px;top:75.7px;font-size:8.4px;line-height:12.6px;height:12.6px;color:#969496;">正常</div>
<svg style="left:607px;top:80px" width="6" height="5" viewBox="0 0 6 5"><path d="M0.5,1 L2.7,3.3 L5,1" fill="none" stroke="#646264" stroke-width="1"/></svg>
<div class="a t" style="left:622.3px;top:75.7px;font-size:8.3px;line-height:12.6px;height:12.6px;color:#7f7d7f;">不透明度:</div>
<div class="a" style="left:662px;top:75.7px;width:27px;height:12.6px;background:#4a484a;border:1px solid #5a585a;"></div>
<div class="a t" style="left:665px;top:75.7px;font-size:7.6px;line-height:12.6px;height:12.6px;color:#6f6d6f;">100%</div>
<div class="a" style="left:689.5px;top:75.7px;width:11px;height:12.6px;background:#4a484a;border:1px solid #5e5c5e;"></div>
<svg style="left:691.5px;top:80px" width="7" height="5" viewBox="0 0 7 5"><path d="M0.6,0.8 L3.3,3.5 L6,0.8" fill="none" stroke="#cfcfcf" stroke-width="1.2"/></svg>
<div class="a" style="left:532px;top:91px;width:168px;height:1px;background:#4a484a;"></div>
<div class="a t" style="left:537.3px;top:94.5px;font-size:8.3px;line-height:12px;height:12px;color:#7f7d7f;">锁定:</div>
<svg style="left:562px;top:96px" width="9" height="9" viewBox="0 0 9 9"><rect x="0.3" y="0.3" width="8.4" height="8.4" fill="#dedede"/><rect x="1.2" y="1.2" width="2.2" height="2.2" fill="#444"/><rect x="5.6" y="1.2" width="2.2" height="2.2" fill="#444"/><rect x="3.4" y="3.4" width="2.2" height="2.2" fill="#444"/><rect x="1.2" y="5.6" width="2.2" height="2.2" fill="#444"/><rect x="5.6" y="5.6" width="2.2" height="2.2" fill="#444"/></svg>
<svg style="left:577px;top:95.5px" width="10" height="10" viewBox="0 0 10 10"><path d="M9.6,0.4 L4.4,5.6 L5.6,6.8 Z" fill="#dedede"/><path d="M4,6 C2.6,6.2 2.8,8 0.6,9.2 C3,9.8 5.2,8.6 5.2,7.2Z" fill="#dedede"/></svg>
<svg style="left:592.5px;top:95.5px" width="10" height="10" viewBox="0 0 10 10"><path d="M5,1.4 V8.6 M1.4,5 H8.6" fill="none" stroke="#dedede" stroke-width="1.1"/><path d="M5,0 L6.7,2.2 H3.3Z M5,10 L6.7,7.8 H3.3Z M0,5 L2.2,3.3 V6.7Z M10,5 L7.8,3.3 V6.7Z" fill="#dedede"/></svg>
<svg style="left:608px;top:95.5px" width="10" height="10" viewBox="0 0 10 10"><path d="M2.6,0.4 V7.4 H9.6 M0.4,2.6 H7.4 V9.6" fill="none" stroke="#dedede" stroke-width="1.2"/><path d="M6,1 L9,4" fill="none" stroke="#dedede" stroke-width="0.9"/></svg>
<svg style="left:624.5px;top:95.3px" width="8" height="10" viewBox="0 0 8 10"><path d="M2,4.4 V2.8 A2,2 0 0 1 6,2.8 V4.4" fill="none" stroke="#dedede" stroke-width="1.2"/><rect x="0.5" y="4.2" width="7" height="5.4" rx="0.6" fill="#dedede"/></svg>
<div class="a t" style="left:639.5px;top:94.5px;font-size:8.3px;line-height:12px;height:12px;color:#7f7d7f;">填充:</div>
<div class="a" style="left:662px;top:94.3px;width:27px;height:12.6px;background:#4a484a;border:1px solid #5a585a;"></div>
<div class="a t" style="left:665px;top:94.3px;font-size:7.6px;line-height:12.6px;height:12.6px;color:#6f6d6f;">100%</div>
<div class="a" style="left:689.5px;top:94.3px;width:11px;height:12.6px;background:#4a484a;border:1px solid #5e5c5e;"></div>
<svg style="left:691.5px;top:98.6px" width="7" height="5" viewBox="0 0 7 5"><path d="M0.6,0.8 L3.3,3.5 L6,0.8" fill="none" stroke="#cfcfcf" stroke-width="1.2"/></svg>
<div class="a" style="left:532px;top:110.5px;width:168px;height:110px;background:#545254;"></div>
<div class="a" style="left:532px;top:110.5px;width:168px;height:1px;background:#454345;"></div>
<div class="a" style="left:553.5px;top:111.5px;width:146.5px;height:26.8px;background:#6b696b;"></div>
<div class="a" style="left:532px;top:137.8px;width:168px;height:1px;background:#4a484a;"></div>
<div class="a" style="left:532px;top:165.0px;width:168px;height:1px;background:#4a484a;"></div>
<div class="a" style="left:532px;top:192.2px;width:168px;height:1px;background:#4a484a;"></div>
<div class="a" style="left:532px;top:219.7px;width:168px;height:1px;background:#4a484a;"></div>
<div class="a" style="left:553px;top:111.5px;width:1px;height:108.7px;background:#504e50;"></div>
<svg style="left:537.5px;top:121.5px" width="10.5" height="7" viewBox="0 0 10.5 7"><path d="M0.3,3.5 C2.2,0.3 8.3,0.3 10.2,3.5 C8.3,6.7 2.2,6.7 0.3,3.5Z" fill="#efefef"/><circle cx="5.25" cy="3.4" r="1.75" fill="#4a484a"/></svg>
<svg style="left:537.5px;top:148.5px" width="10.5" height="7" viewBox="0 0 10.5 7"><path d="M0.3,3.5 C2.2,0.3 8.3,0.3 10.2,3.5 C8.3,6.7 2.2,6.7 0.3,3.5Z" fill="#efefef"/><circle cx="5.25" cy="3.4" r="1.75" fill="#4a484a"/></svg>
<svg style="left:537.5px;top:175.8px" width="10.5" height="7" viewBox="0 0 10.5 7"><path d="M0.3,3.5 C2.2,0.3 8.3,0.3 10.2,3.5 C8.3,6.7 2.2,6.7 0.3,3.5Z" fill="#efefef"/><circle cx="5.25" cy="3.4" r="1.75" fill="#4a484a"/></svg>
<svg style="left:537.5px;top:203.3px" width="10.5" height="7" viewBox="0 0 10.5 7"><path d="M0.3,3.5 C2.2,0.3 8.3,0.3 10.2,3.5 C8.3,6.7 2.2,6.7 0.3,3.5Z" fill="#efefef"/><circle cx="5.25" cy="3.4" r="1.75" fill="#4a484a"/></svg>
<div class="a" style="left:557px;top:114px;width:15.3px;height:21.2px;background-color:#fff;background-image:linear-gradient(45deg,#cfcfcf 25%,transparent 25%,transparent 75%,#cfcfcf 75%),linear-gradient(45deg,#cfcfcf 25%,transparent 25%,transparent 75%,#cfcfcf 75%);background-size:4.6px 4.6px;background-position:0 0,2.3px 2.3px;"></div>
<svg style="left:555px;top:112px" width="20" height="26" viewBox="0 0 20 26"><path d="M0.6,5 V0.6 H5 M14.4,0.6 H18.8 V5 M18.8,20.4 V24.8 H14.4 M5,24.8 H0.6 V20.4" fill="none" stroke="#f4f4f4" stroke-width="1.2"/></svg>
<div class="a" style="left:556px;top:141px;width:16.6px;height:21.8px;background-color:#8b8b83;background-image:linear-gradient(45deg,#73736c 25%,transparent 25%,transparent 75%,#73736c 75%),linear-gradient(45deg,#73736c 25%,transparent 25%,transparent 75%,#73736c 75%);background-size:4.6px 4.6px;background-position:0 0,2.3px 2.3px;"><div class="a" style="left:0;top:0;width:100%;height:100%;background:radial-gradient(circle at 50% 54%,rgba(255,255,255,.95) 0,rgba(255,255,255,.5) 1.5px,rgba(255,255,255,0) 4.5px)"></div></div>
<div class="a" style="left:556px;top:168.3px;width:16.6px;height:21.8px;background-color:#8b8b83;background-image:linear-gradient(45deg,#73736c 25%,transparent 25%,transparent 75%,#73736c 75%),linear-gradient(45deg,#73736c 25%,transparent 25%,transparent 75%,#73736c 75%);background-size:4.6px 4.6px;background-position:0 0,2.3px 2.3px;"><div class="a" style="left:0;top:0;width:100%;height:100%;background:radial-gradient(circle at 50% 54%,rgba(255,255,255,.95) 0,rgba(255,255,255,.5) 1.5px,rgba(255,255,255,0) 4.5px)"></div></div>
<div class="a" style="left:556px;top:195.5px;width:16.8px;height:21.8px;background:#0f2129;background-image:radial-gradient(circle at 50% 52%,#f0c63a 0,#e2b228 1.2px,rgba(30,60,60,.6) 2.6px,rgba(15,33,41,0) 6px);"></div>
<div class="a t" style="left:580px;top:118.5px;font-size:8.6px;line-height:13px;height:13px;color:#eaeaea;font-weight:500;">光</div>
<div class="a t" style="left:580px;top:145.7px;font-size:8.6px;line-height:13px;height:13px;color:#eaeaea;font-weight:500;">黑色渐变 拷贝</div>
<div class="a t" style="left:580px;top:173px;font-size:8.6px;line-height:13px;height:13px;color:#eaeaea;font-weight:500;">黑色渐变</div>
<div class="a t" style="left:580px;top:200.3px;font-size:8.6px;line-height:13px;height:13px;color:#eaeaea;font-weight:bold;">背景</div>
<svg style="left:676px;top:201.5px" width="8.6" height="10" viewBox="0 0 8.6 10"><path d="M2.2,4.4 V2.8 A2.1,2.1 0 0 1 6.4,2.8 V4.4" fill="none" stroke="#d8d8d8" stroke-width="1"/><rect x="0.8" y="4.4" width="7" height="5" rx="0.6" fill="none" stroke="#d8d8d8" stroke-width="1"/><rect x="3.6" y="6" width="1.4" height="1.8" fill="#d8d8d8"/></svg>
<div class="a" style="left:532px;top:220.7px;width:168px;height:79px;background:#4f4d4f;"></div>
<div class="a" style="left:532px;top:299.7px;width:168px;height:18.6px;background:#555355;"></div>
<svg style="left:564px;top:306.5px" width="12" height="6" viewBox="0 0 12 6"><circle cx="2.8" cy="3" r="2.1" fill="none" stroke="#8e8c8e" stroke-width="1"/><circle cx="8.6" cy="3" r="2.1" fill="none" stroke="#8e8c8e" stroke-width="1"/></svg>
<div class="a t" style="left:584px;top:302.3px;font-size:11px;line-height:13px;height:13px;color:#e2e2e2;font-weight:bold;font-style:italic;font-family:'Liberation Serif',serif;letter-spacing:-0.3px;">fx</div>
<div class="a" style="left:593.3px;top:314.3px;width:1.6px;height:1.6px;background:#e2e2e2;"></div>
<svg style="left:601.5px;top:305px" width="11" height="9" viewBox="0 0 11 9"><rect x="0.2" y="0.2" width="10.4" height="8" fill="#e2e2e2"/><ellipse cx="5.4" cy="4.2" rx="2.9" ry="2.5" fill="#3c3a3c"/></svg>
<svg style="left:621.5px;top:304.8px" width="9" height="9" viewBox="0 0 9 9"><circle cx="4.5" cy="4.5" r="3.7" fill="none" stroke="#e2e2e2" stroke-width="1.2"/><path d="M1.9,7.1 A3.7,3.7 0 0 0 7.1,1.9Z" fill="#e2e2e2"/></svg>
<div class="a" style="left:631.7px;top:314.3px;width:1.6px;height:1.6px;background:#e2e2e2;"></div>
<svg style="left:640px;top:305.5px" width="10" height="8" viewBox="0 0 10 8"><path d="M0.2,0.8 H3.6 L4.6,2 H9.4 V7.8 H0.2Z" fill="#e2e2e2"/></svg>
<svg style="left:659.5px;top:305.5px" width="9" height="9" viewBox="0 0 9 9"><path d="M0.8,0.8 H8 V8 H3.2 L0.8,5.6Z" fill="none" stroke="#e2e2e2" stroke-width="1.2"/><path d="M0.8,5.6 H3.2 V8" fill="none" stroke="#e2e2e2" stroke-width="1"/></svg>
<svg style="left:677.5px;top:304.5px" width="9" height="10" viewBox="0 0 9 10"><path d="M0.4,2 H8.2 M3,2 V0.7 H5.6 V2" fill="none" stroke="#e2e2e2" stroke-width="1"/><path d="M1.2,2.8 H7.4 V9.4 H1.2Z" fill="none" stroke="#e2e2e2" stroke-width="1.1"/><path d="M3.2,4 V8.2 M5.4,4 V8.2" stroke="#e2e2e2" stroke-width="0.9"/></svg>
<div class="a" style="left:519.5px;top:318.3px;width:180.5px;height:1.2px;background:#3a383a;"></div>
<div class="a" style="left:532px;top:319.5px;width:168px;height:20.3px;background:#3f3d3f;"></div>
<div class="a" style="left:532px;top:319.5px;width:46.8px;height:20.3px;background:#535153;"></div>
<div class="a" style="left:611px;top:320px;width:1px;height:19.5px;background:#4b494b;"></div>
<div class="a t" style="left:538px;top:323px;font-size:8.6px;line-height:13px;height:13px;color:#f2f2f2;font-weight:bold;">历史记录</div>
<div class="a t" style="left:585px;top:323px;font-size:8.6px;line-height:13px;height:13px;color:#a9a9a9;">信息</div>
<div class="a" style="left:694.5px;top:327px;width:6px;height:1.2px;background:#b8b8b8;"></div>
<div class="a" style="left:694.5px;top:329.4px;width:6px;height:1.2px;background:#b8b8b8;"></div>
<div class="a" style="left:694.5px;top:331.8px;width:6px;height:1.2px;background:#b8b8b8;"></div>
<div class="a" style="left:532px;top:339.8px;width:168px;height:92px;background:#545254;"></div>
<div class="a" style="left:532px;top:355.7px;width:163.5px;height:1px;background:#484648;"></div>
<div class="a" style="left:536.3px;top:343.5px;width:8px;height:8px;background:#4f4d4f;border:1px solid #605e60;"></div>
<svg style="left:553.5px;top:342.4px" width="12" height="11" viewBox="0 0 12 11"><path d="M0.3,1.5 V0.4 H4.8 L5.6,1.5 H11.4 V10.6 H0.3Z" fill="#d9d9d9"/><path d="M2,4.1 H9.7 M2,6.3 H9.7 M2,8.5 H9.7" stroke="#636163" stroke-width="0.8"/></svg>
<div class="a t" style="left:573px;top:341.8px;font-size:8.6px;line-height:13px;height:13px;color:#dcdcdc;">新建锚点</div>
<div class="a" style="left:532px;top:372.1px;width:163.5px;height:1px;background:#484648;"></div>
<div class="a" style="left:536.3px;top:359.9px;width:8px;height:8px;background:#4f4d4f;border:1px solid #605e60;"></div>
<svg style="left:553.5px;top:358.8px" width="12" height="11" viewBox="0 0 12 11"><path d="M0.3,1.5 V0.4 H4.8 L5.6,1.5 H11.4 V10.6 H0.3Z" fill="#d9d9d9"/><path d="M2,4.1 H9.7 M2,6.3 H9.7 M2,8.5 H9.7" stroke="#636163" stroke-width="0.8"/></svg>
<div class="a t" style="left:573px;top:358.2px;font-size:8.6px;line-height:13px;height:13px;color:#dcdcdc;">角拖移</div>
<div class="a" style="left:532px;top:388.5px;width:163.5px;height:1px;background:#484648;"></div>
<div class="a" style="left:536.3px;top:376.3px;width:8px;height:8px;background:#4f4d4f;border:1px solid #605e60;"></div>
<svg style="left:553.5px;top:375.2px" width="12" height="11" viewBox="0 0 12 11"><path d="M0.3,1.5 V0.4 H4.8 L5.6,1.5 H11.4 V10.6 H0.3Z" fill="#d9d9d9"/><path d="M2,4.1 H9.7 M2,6.3 H9.7 M2,8.5 H9.7" stroke="#636163" stroke-width="0.8"/></svg>
<div class="a t" style="left:573px;top:374.6px;font-size:8.6px;line-height:13px;height:13px;color:#dcdcdc;">拖移锚点</div>
<div class="a" style="left:532px;top:404.9px;width:163.5px;height:1px;background:#484648;"></div>
<div class="a" style="left:536.3px;top:392.7px;width:8px;height:8px;background:#4f4d4f;border:1px solid #605e60;"></div>
<svg style="left:553.5px;top:391.6px" width="12" height="11" viewBox="0 0 12 11"><path d="M0.3,1.5 V0.4 H4.8 L5.6,1.5 H11.4 V10.6 H0.3Z" fill="#d9d9d9"/><path d="M2,4.1 H9.7 M2,6.3 H9.7 M2,8.5 H9.7" stroke="#636163" stroke-width="0.8"/></svg>
<div class="a t" style="left:573px;top:391.0px;font-size:8.6px;line-height:13px;height:13px;color:#dcdcdc;">拖移锚点</div>
<div class="a" style="left:532px;top:421.3px;width:163.5px;height:1px;background:#484648;"></div>
<div class="a" style="left:536.3px;top:409.1px;width:8px;height:8px;background:#4f4d4f;border:1px solid #605e60;"></div>
<svg style="left:553.5px;top:408.0px" width="12" height="11" viewBox="0 0 12 11"><path d="M0.3,1.5 V0.4 H4.8 L5.6,1.5 H11.4 V10.6 H0.3Z" fill="#d9d9d9"/><path d="M2,4.1 H9.7 M2,6.3 H9.7 M2,8.5 H9.7" stroke="#636163" stroke-width="0.8"/></svg>
<div class="a t" style="left:573px;top:407.4px;font-size:8.6px;line-height:13px;height:13px;color:#dcdcdc;">闭合路径</div>
<div class="a" style="left:532px;top:437.7px;width:163.5px;height:1px;background:#484648;"></div>
<div class="a" style="left:536.3px;top:425.5px;width:8px;height:8px;background:#4f4d4f;border:1px solid #605e60;"></div>
<svg style="left:553.5px;top:424.4px" width="12" height="11" viewBox="0 0 12 11"><path d="M0.3,1.5 V0.4 H4.8 L5.6,1.5 H11.4 V10.6 H0.3Z" fill="#d9d9d9"/><path d="M2,4.1 H9.7 M2,6.3 H9.7 M2,8.5 H9.7" stroke="#636163" stroke-width="0.8"/></svg>
<div class="a t" style="left:573px;top:423.8px;font-size:8.6px;line-height:13px;height:13px;color:#dcdcdc;">名称更改</div>
<div class="a" style="left:695.7px;top:339.8px;width:4.3px;height:92px;background:#434143;"></div>
<div class="a" style="left:696px;top:417px;width:4px;height:14px;background:#6a686a;"></div>
<svg style="left:696px;top:344px" width="4" height="4" viewBox="0 0 4 4"><path d="M0.4,2.6 L2,0.8 L3.6,2.6Z" fill="#8a888a"/></svg>
<div class="a" style="left:267.5px;top:97.8px;width:192px;height:78.4px;background:#525252;box-shadow:0 1px 4px rgba(0,0,0,.55);"></div>
<div class="a" style="left:267.5px;top:97.8px;width:192px;height:21.4px;background:#ffffff;"></div>
<div class="a t" style="left:273.5px;top:101.5px;font-size:8.4px;line-height:14px;height:14px;color:#2b2b2b;">羽化选区</div>
<svg style="left:446px;top:104.5px" width="8" height="8" viewBox="0 0 8 8"><path d="M0.5,0.5 L7.3,7.3 M7.3,0.5 L0.5,7.3" stroke="#333" stroke-width="1.1" fill="none"/></svg>
<div class="a t" style="left:285.5px;top:131.5px;font-size:8.6px;line-height:14px;height:14px;color:#dadada;letter-spacing:0.35px;">羽化半径(R):</div>
<div class="a" style="left:340px;top:131.3px;width:36.3px;height:13.4px;background:#3c3c3c;border:1.2px solid #2a66a8;"></div>
<div class="a" style="left:341.6px;top:133px;width:10.6px;height:10px;background:#2f7fd6;"></div>
<div class="a t" style="left:342.3px;top:131.5px;font-size:8.8px;line-height:13.4px;height:13.4px;color:#ffffff;">20</div>
<div class="a t" style="left:384px;top:131.5px;font-size:8.6px;line-height:14px;height:14px;color:#dadada;">像素</div>
<div class="a" style="left:415.5px;top:126.3px;width:38px;height:19px;border:1.2px solid #cdcdcd;border-radius:9.5px;"></div>
<div class="a t" style="left:415.5px;top:128.8px;font-size:8.6px;line-height:14px;height:14px;color:#f2f2f2;width:38px;text-align:center;font-weight:bold;">确定</div>
<div class="a" style="left:415.5px;top:150.3px;width:38px;height:19px;border:1.1px solid #737373;border-radius:9.5px;"></div>
<div class="a t" style="left:415.5px;top:152.8px;font-size:8.6px;line-height:14px;height:14px;color:#f2f2f2;width:38px;text-align:center;font-weight:bold;">取消</div>
<div class="a" style="left:274.5px;top:152.5px;width:9px;height:8.8px;background:#454545;border:1px solid #6c6c6c;border-radius:1.5px;"></div>
<div class="a t" style="left:290px;top:150.2px;font-size:8.6px;line-height:14px;height:14px;color:#e2e2e2;letter-spacing:0.4px;">应用画布边界的效果</div>
</div></body></html>
